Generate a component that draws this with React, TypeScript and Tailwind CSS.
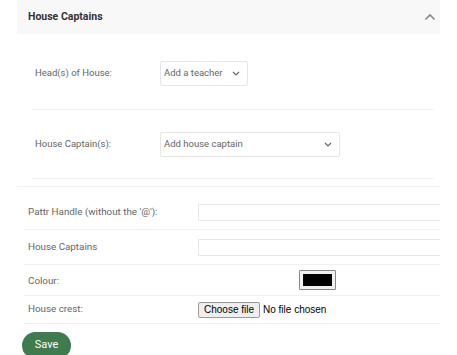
import React from "react";

const Chevron = ({ className = "" }: { className?: string }) => (
  <svg width="8" height="5" viewBox="0 0 8 5" className={className} fill="none">
    <path d="M1 1 L4 4 L7 1" stroke="#666" strokeWidth="1.2" />
  </svg>
);

export default function App() {
  return (
    <div className="w-[457px] h-[355px] bg-white overflow-hidden text-[#666]" style={{ fontFamily: "Roboto, 'Liberation Sans', sans-serif" }}>
      <div className="ml-[17px] w-[423px] h-[34px] bg-[#f8f8f8] flex items-center justify-between pl-[11px] pr-[4px]">
        <span className="text-[10.5px] font-bold text-[#333]">House Captains</span>
        <svg width="12" height="8" viewBox="0 0 12 8" fill="none">
          <path d="M1.5 6.5 L6 2 L10.5 6.5" stroke="#888" strokeWidth="1.6" />
        </svg>
      </div>

      <div className="ml-[32px] w-[402px]">
        <div className="h-[76px] flex items-center border-b border-[#f2f2f2] pt-[4px]">
          <span className="w-[128px] pl-[3px] text-[9.5px] whitespace-nowrap">Head(s) of House:</span>
          <div className="w-[88px] h-[25px] border border-[#e6e6e6] rounded-[2px] flex items-center justify-between pl-[3px] pr-[7px]">
            <span className="text-[9.5px] whitespace-nowrap">Add a teacher</span>
            <Chevron />
          </div>
        </div>
        <div className="h-[69px] flex items-center border-b border-[#f2f2f2]">
          <span className="w-[128px] pl-[3px] text-[9.5px] whitespace-nowrap">House Captain(s):</span>
          <div className="w-[180px] h-[25px] border border-[#e6e6e6] rounded-[2px] flex items-center justify-between pl-[3px] pr-[7px]">
            <span className="text-[9.5px] whitespace-nowrap">Add house captain</span>
            <Chevron />
          </div>
        </div>
      </div>
      <div className="ml-[17px] w-[423px] h-[8px] border-b border-[#f2f2f2]" />

      <div className="ml-[24px] w-[416px] text-[9.8px]">
        <div className="h-[34px] flex items-center border-b border-[#f0f0f0] pt-[8px] box-content">
          <span className="w-[174px] pl-[4px] whitespace-nowrap">Pattr Handle (without the '@'):</span>
          <div className="flex-1 h-[17px] border border-[#e8e8e8] border-r-0" />
        </div>
        <div className="h-[35px] flex items-center border-b border-[#f0f0f0]">
          <span className="w-[174px] pl-[4px]">House Captains</span>
          <div className="flex-1 h-[17px] border border-[#e8e8e8] border-r-0" />
        </div>
        <div className="h-[31px] flex items-center border-b border-[#f0f0f0]">
          <span className="w-[275px] pl-[4px] pt-[2px]">Colour:</span>
          <div className="w-[37px] h-[20px] border border-[#888] rounded-[1px] bg-[#f0f0f0] p-[3px] mb-[1px]">
            <div className="w-full h-full bg-black" />
          </div>
        </div>
        <div className="h-[28px] flex items-center border-b border-[#f0f0f0]">
          <span className="w-[174px] pl-[4px]">House crest:</span>
          <div className="h-[16px] px-[5px] border border-[#9a9a9a] rounded-[2px] bg-[#efefef] flex items-center text-[10px] text-black" style={{ fontFamily: "Arial, 'Liberation Sans', sans-serif" }}>Choose file</div>
          <span className="ml-[3px] text-[10px] text-black" style={{ fontFamily: "Arial, 'Liberation Sans', sans-serif" }}>No file chosen</span>
        </div>
      </div>

      <div className="ml-[22px] mt-[8px] w-[49px] h-[27px] rounded-full bg-[#3e7b4f] flex items-center justify-center text-white text-[11px]">
        Save
      </div>
    </div>
  );
}
